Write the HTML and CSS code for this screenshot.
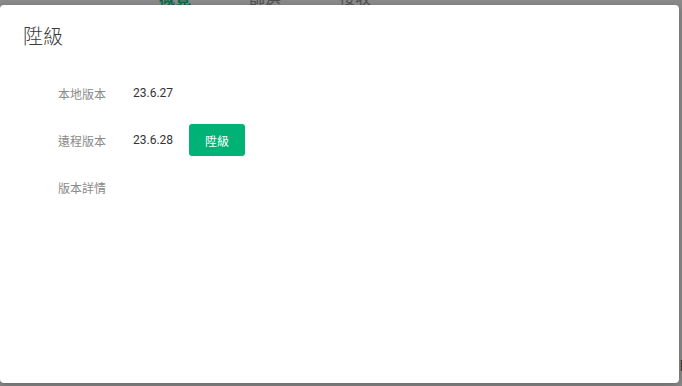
FILE: index.html
```html
<!DOCTYPE html>
<html lang="zh-Hant">
<head>
<meta charset="utf-8">
<title>陞級</title>
<link rel="stylesheet" href="styles.css">
</head>
<body>
<div class="page">
  <nav class="tabs">
    <span class="tab active">概覽</span>
    <span class="tab">篩選</span>
    <span class="tab">接收</span>
  </nav>
  <div class="page-body">
    <span class="edge-text">目</span>
  </div>
</div>
<div class="dialog">
  <h1 class="title">陞級</h1>
  <div class="form">
    <div class="row">
      <span class="label">本地版本</span>
      <span class="value">23.6.27</span>
    </div>
    <div class="row">
      <span class="label">遠程版本</span>
      <span class="value">23.6.28</span>
      <button class="btn">陞級</button>
    </div>
    <div class="row">
      <span class="label">版本詳情</span>
    </div>
  </div>
</div>
</body>
</html>
```

FILE: styles.css
```css
* { box-sizing: border-box; }
html, body {
  margin: 0;
  padding: 0;
  width: 682px;
  height: 386px;
  overflow: hidden;
}
body {
  background: #8a8a8a;
  font-family: Roboto, "Noto Sans CJK TC", sans-serif;
  position: relative;
}
.page {
  height: 386px;
  display: flex;
  flex-direction: column;
}
.tabs {
  display: flex;
  gap: 58px;
  padding-left: 159px;
  margin-top: -15px;
  height: 24px;
  font-family: "Noto Sans CJK TC", sans-serif;
  font-size: 16px;
  line-height: 24px;
}
.tab { color: #505050; width: 32px; }
.tab.active { color: #0b6b48; font-weight: 700; }
.page-body {
  flex: 1;
  display: flex;
  justify-content: flex-end;
  align-items: flex-end;
  padding-bottom: 14px;
}
.edge-text {
  font-family: "Noto Sans CJK TC", sans-serif;
  font-size: 12px;
  line-height: 14px;
  color: #2a2a2a;
  margin-right: -9px;
}
.dialog {
  position: absolute;
  left: 0;
  top: 5px;
  width: 679px;
  height: 378px;
  background: #fff;
  border-radius: 4px;
  box-shadow: 0 2px 6px rgba(0, 0, 0, 0.25);
  padding: 19px 0 0 23px;
}
.title {
  margin: 0;
  font-family: "Noto Sans CJK TC", sans-serif;
  font-weight: 300;
  font-size: 20px;
  line-height: 24px;
  color: #3a3a3a;
}
.form {
  margin-top: 29px;
  padding-left: 35px;
  display: flex;
  flex-direction: column;
  gap: 15px;
}
.row {
  display: flex;
  align-items: center;
  height: 32px;
}
.label {
  width: 75px;
  font-family: "Noto Sans CJK TC", sans-serif;
  font-size: 12px;
  color: #8a8a8a;
}
.value {
  font-size: 12px;
  color: #333;
}
.btn {
  margin-left: 16px;
  width: 56px;
  height: 32px;
  border: none;
  border-radius: 3px;
  background: #00b276;
  color: #fff;
  font-family: "Noto Sans CJK TC", sans-serif;
  font-size: 12px;
  padding: 0;
}
```
